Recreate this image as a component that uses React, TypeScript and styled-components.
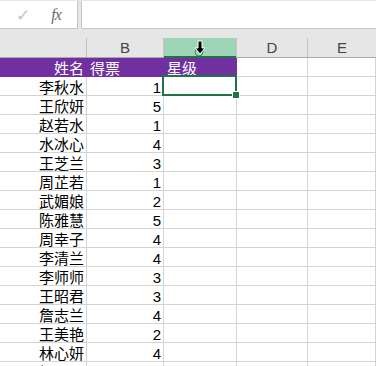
import { createGlobalStyle, styled } from "styled-components";

const GlobalStyle = createGlobalStyle`
  html, body {
    margin: 0;
    padding: 0;
    background: #ffffff;
    overflow: hidden;
  }
  body {
    font-family: "Liberation Sans", "Noto Sans CJK SC", sans-serif;
  }
`;

const rows: [string, number][] = [
  ["李秋水", 1],
  ["王欣妍", 5],
  ["赵若水", 1],
  ["水冰心", 4],
  ["王芝兰", 3],
  ["周芷若", 1],
  ["武媚娘", 2],
  ["陈雅慧", 5],
  ["周幸子", 4],
  ["李清兰", 4],
  ["李师师", 3],
  ["王昭君", 3],
  ["詹志兰", 4],
  ["王美艳", 2],
  ["林心妍", 4],
  ["杨玉环", 5],
];

const COLS = "87px 77px 73px 71px 1fr";

function App() {
  return (
    <Page>
      <GlobalStyle />
      <FormulaBar>
        <NameArea>
          <CheckMark>✓</CheckMark>
          <Fx>fx</Fx>
        </NameArea>
        <FormulaInput />
      </FormulaBar>
      <HeaderRow>
        <HeadCell />
        <HeadCell>B</HeadCell>
        <HeadCell active>
          <svg width="14" height="16" viewBox="0 0 14 16">
            <circle cx="6" cy="12" r="4" fill="none" stroke="#3f8a5e" strokeWidth="1" />
            <path
              d="M5 1 H9 V8 H12 L7 14 L2 8 H5 Z"
              fill="#000"
              stroke="#fff"
              strokeWidth="1"
            />
          </svg>
        </HeadCell>
        <HeadCell>D</HeadCell>
        <HeadCell>E</HeadCell>
      </HeaderRow>
      <Sheet>
        <Row>
          <Cell purple align="right">姓名</Cell>
          <Cell purple>得票</Cell>
          <Cell purple>星级</Cell>
          <Cell />
          <Cell />
        </Row>
        {rows.map(([name, votes], i) => (
          <Row key={i}>
            <Cell align="right">{name}</Cell>
            <Cell align="right">{votes}</Cell>
            <Cell selected={i === 0} />
            <Cell />
            <Cell />
          </Row>
        ))}
      </Sheet>
    </Page>
  );
}

const Page = styled.div`
  width: 376px;
  height: 366px;
  overflow: hidden;
  background: #ffffff;
`;

const FormulaBar = styled.div`
  display: flex;
  gap: 3px;
  height: 38px;
  background: #e6e6e6;
  box-sizing: border-box;
  padding-top: 1px;
`;

const NameArea = styled.div`
  box-sizing: border-box;
  width: 78px;
  height: 28px;
  background: #ffffff;
  border-right: 1px solid #c6c6c6;
  border-bottom: 1px solid #c6c6c6;
  display: flex;
  align-items: center;
  gap: 21px;
  padding-left: 16px;
`;

const CheckMark = styled.span`
  font-family: "DejaVu Sans", sans-serif;
  font-size: 17px;
  color: #c4c4c4;
`;

const Fx = styled.span`
  font-family: "Liberation Serif", serif;
  font-style: italic;
  font-size: 16px;
  color: #6a6a6a;
  letter-spacing: -1px;
`;

const FormulaInput = styled.div`
  box-sizing: border-box;
  flex: 1;
  height: 28px;
  background: #ffffff;
  border-left: 1px solid #c6c6c6;
  border-bottom: 1px solid #c6c6c6;
`;

const HeaderRow = styled.div`
  display: grid;
  grid-template-columns: ${COLS};
  height: 19px;
  background: #e6e6e6;
  border-bottom: 1px solid #a8a8a8;
`;

const HeadCell = styled.div<{ active?: boolean }>`
  display: flex;
  align-items: center;
  justify-content: center;
  font-size: 15px;
  color: #444444;
  border-right: 1px solid #c2c2c2;
  background: ${(p) => (p.active ? "#9fd5b7" : "transparent")};
  box-shadow: ${(p) => (p.active ? "inset 0 -2px 0 #217346" : "none")};
  margin-bottom: ${(p) => (p.active ? "-1px" : "0")};
  &:last-child {
    border-right: none;
  }
`;

const Sheet = styled.div`
  display: flex;
  flex-direction: column;
`;

const Row = styled.div`
  display: grid;
  grid-template-columns: ${COLS};
  grid-template-rows: 19px;
  height: 19px;
`;

const Cell = styled.div<{
  purple?: boolean;
  align?: "left" | "right";
  selected?: boolean;
}>`
  position: relative;
  box-sizing: border-box;
  height: 19px;
  border-right: 1px solid ${(p) => (p.purple ? "#7030a0" : "#d4d4d4")};
  border-bottom: 1px solid ${(p) => (p.purple ? "#7030a0" : "#d4d4d4")};
  background: ${(p) => (p.purple ? "#7030a0" : "#ffffff")};
  color: ${(p) => (p.purple ? "#ffffff" : "#000000")};
  font-family: "Liberation Sans", "Noto Sans CJK SC", sans-serif;
  font-size: 15px;
  line-height: 15px;
  white-space: nowrap;
  text-align: ${(p) => p.align ?? "left"};
  padding: 3px 2px 0 3px;

  ${(p) =>
    p.selected &&
    `
    &::after {
      content: "";
      position: absolute;
      left: -2px;
      top: -2px;
      right: -1px;
      bottom: -1px;
      border: 2px solid #217346;
    }
    &::before {
      content: "";
      position: absolute;
      right: -4px;
      bottom: -4px;
      width: 6px;
      height: 6px;
      background: #217346;
      border: 1px solid #ffffff;
      z-index: 2;
    }
  `}
`;

export default App;
